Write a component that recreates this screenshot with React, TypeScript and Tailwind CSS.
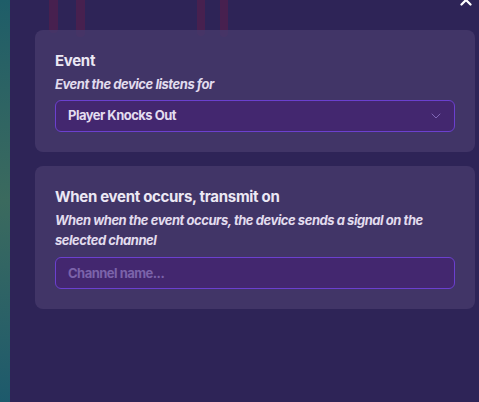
import { ChevronDown, X } from "lucide-react";

const font = { fontFamily: "Inter, 'Noto Sans', sans-serif" };

function Card({ children }: { children: React.ReactNode }) {
  return (
    <div className="rounded-lg bg-[#463a6c]/80 px-5 pt-5 pb-5">
      {children}
    </div>
  );
}

export default function App() {
  return (
    <div className="flex h-[402px] w-[479px] overflow-hidden" style={font}>
      <div className="w-[10px] shrink-0 bg-gradient-to-b from-[#1e5d68] via-[#3b6a5e] to-[#1d5a6c]" />
      <div className="relative flex-1 bg-[#2e2457]">
        {/* blurred game stuff behind the panel */}
        <div className="absolute left-[39px] top-0 flex gap-[18px]">
          <div className="h-[33px] w-[9px] rounded-b bg-[#47204f]" />
          <div className="h-[37px] w-[9px] rounded-b bg-[#47204f]" />
        </div>
        <div className="absolute left-[187px] top-0 flex gap-[15px]">
          <div className="h-[36px] w-[8px] rounded-b bg-[#47204f]" />
          <div className="h-[37px] w-[8px] rounded-b bg-[#47204f]" />
        </div>
        <X className="absolute right-[4px] top-[-9px] h-[18px] w-[18px] text-white" strokeWidth={3} />

        <div className="relative flex flex-col gap-[14px] pl-[25px] pr-[4px] pt-[30px]">
          <Card>
            <div className="text-[15px] font-bold leading-[22px] tracking-[-0.02em] text-[#ece8f4]">Event</div>
            <div className="mt-[2px] text-[13px] font-bold italic leading-[20px] tracking-[-0.035em] text-[#e2dcee]">
              Event the device listens for
            </div>
            <div className="mt-1.5 flex h-8 items-center justify-between rounded-md border border-[#6b40cf] bg-[#43276f] pl-3 pr-2.5">
              <span className="text-[13px] font-bold tracking-[-0.04em] text-[#e4ddf0]">Player Knocks Out</span>
              <ChevronDown className="h-4 w-4 text-[#8c74c4]" strokeWidth={1.25} />
            </div>
          </Card>

          <Card>
            <div className="text-[15px] font-bold leading-[22px] tracking-[-0.02em] text-[#ece8f4]">
              When event occurs, transmit on
            </div>
            <div className="mt-[2px] text-[13px] font-bold italic leading-[20px] tracking-[-0.035em] text-[#e2dcee]">
              When when the event occurs, the device sends a signal on the selected channel
            </div>
            <input
              className="mt-[7px] block h-8 w-full rounded-md border border-[#6b40cf] bg-[#43276f] px-3 text-[13px] font-bold tracking-[-0.04em] text-[#e4ddf0] outline-none placeholder:text-[#7b63aa]"
              placeholder="Channel name..."
            />
          </Card>
        </div>
      </div>
    </div>
  );
}
